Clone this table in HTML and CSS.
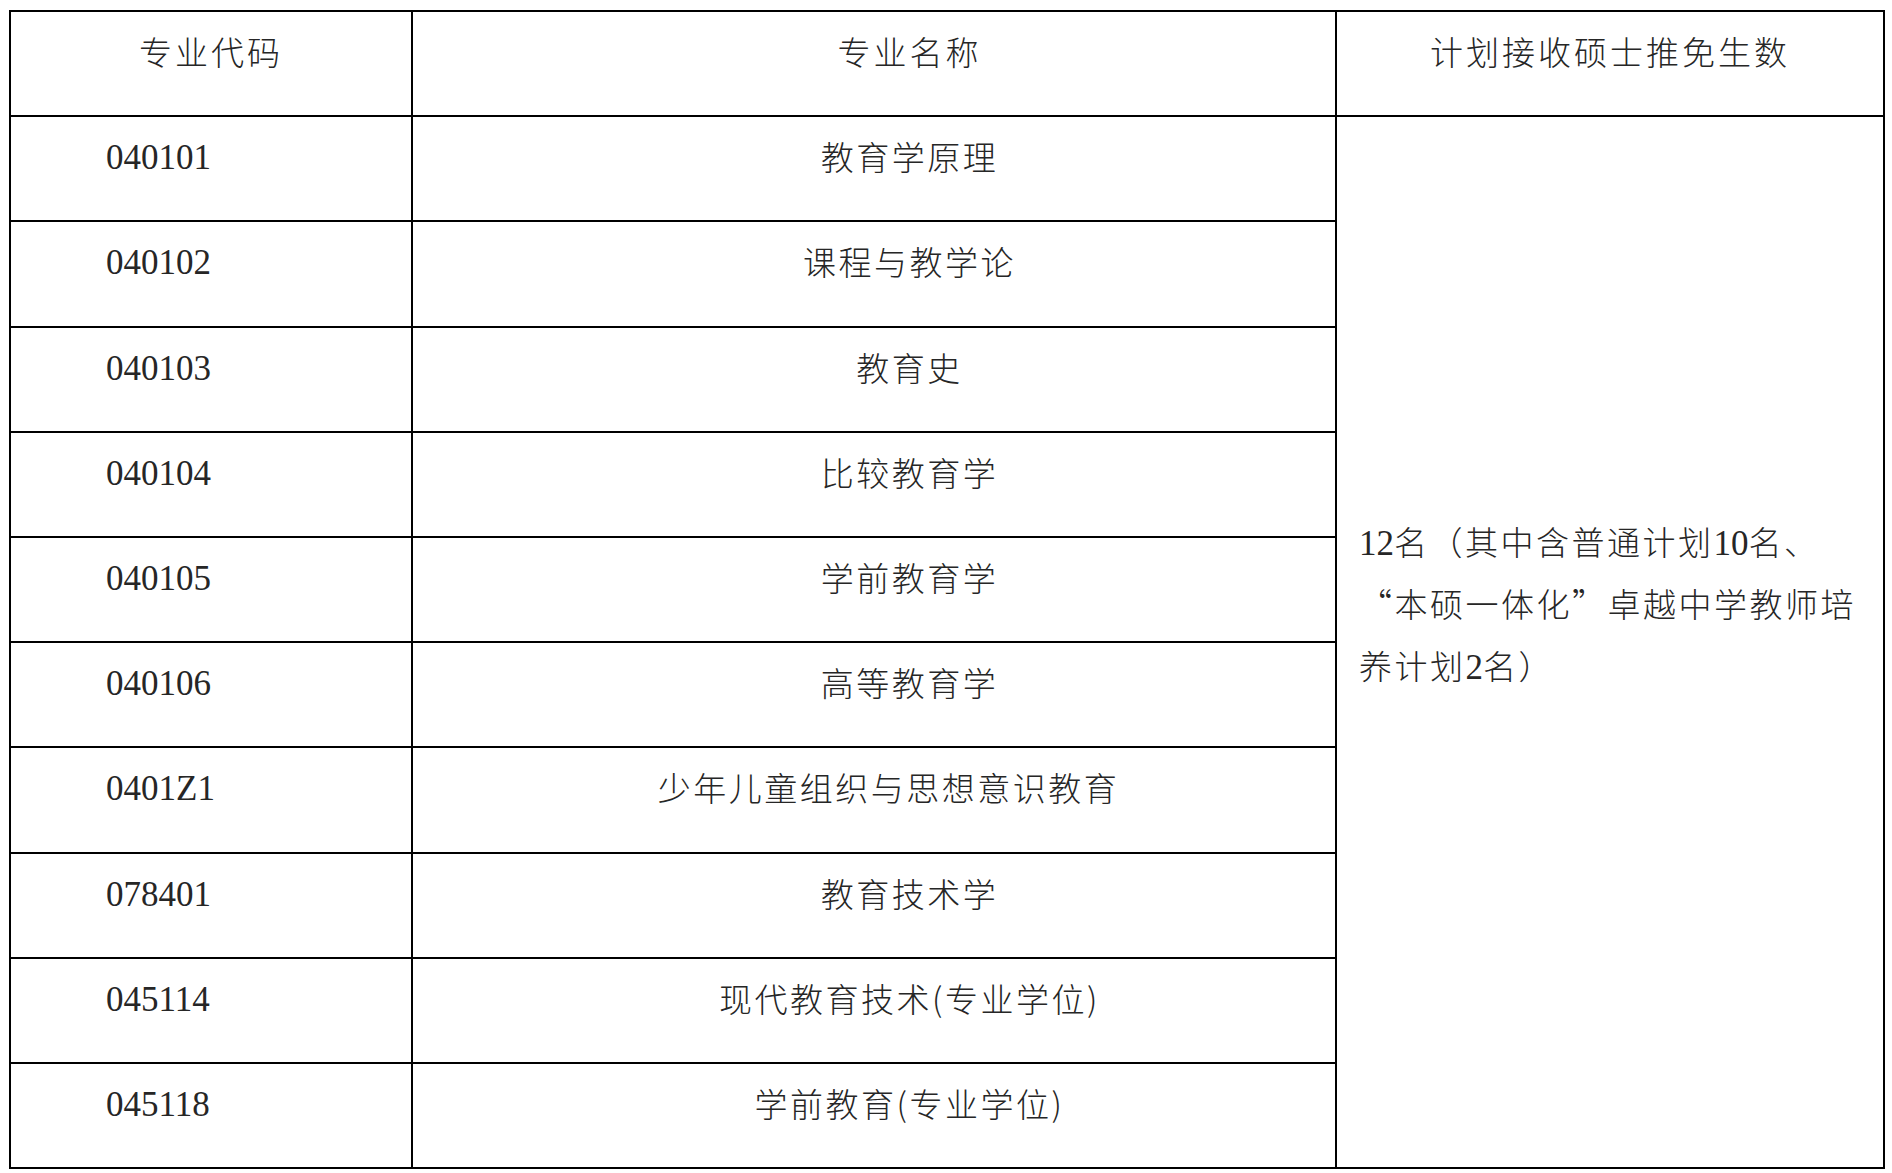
FILE: index.html
```html
<!DOCTYPE html>
<html lang="zh-CN">
<head>
<meta charset="utf-8">
<title>计划接收硕士推免生数</title>
<link rel="stylesheet" href="styles.css">
</head>
<body>
<table class="plan">
  <thead>
    <tr>
      <th class="h-code">专业代码</th>
      <th class="h-name">专业名称</th>
      <th class="h-quota">计划接收硕士推免生数</th>
    </tr>
  </thead>
  <tbody>
    <tr>
      <td class="code">040101</td>
      <td class="name">教育学原理</td>
      <td class="quota" rowspan="10"><span class="num">12</span>名（其中含普通计划<span class="num">10</span>名、<br>“本硕一体化”卓越中学教师培<br>养计划<span class="num">2</span>名）</td>
    </tr>
    <tr>
      <td class="code">040102</td>
      <td class="name">课程与教学论</td>
    </tr>
    <tr>
      <td class="code">040103</td>
      <td class="name">教育史</td>
    </tr>
    <tr>
      <td class="code">040104</td>
      <td class="name">比较教育学</td>
    </tr>
    <tr>
      <td class="code">040105</td>
      <td class="name">学前教育学</td>
    </tr>
    <tr>
      <td class="code">040106</td>
      <td class="name">高等教育学</td>
    </tr>
    <tr>
      <td class="code">0401Z1</td>
      <td class="name name-short-indent">少年儿童组织与思想意识教育</td>
    </tr>
    <tr>
      <td class="code">078401</td>
      <td class="name">教育技术学</td>
    </tr>
    <tr>
      <td class="code">045114</td>
      <td class="name">现代教育技术(专业学位)</td>
    </tr>
    <tr>
      <td class="code">045118</td>
      <td class="name">学前教育(专业学位)</td>
    </tr>
  </tbody>
</table>
</body>
</html>
```

FILE: styles.css
```css
html, body {
  margin: 0;
  padding: 0;
  background: #ffffff;
}

.plan {
  box-sizing: border-box;
  width: 1876px;
  margin: 10px 0 0 9px;
  border-collapse: separate;
  border-spacing: 0;
  table-layout: fixed;
  border-top: 2px solid #000;
  border-left: 2px solid #000;
  font-family: "Noto Sans CJK SC", sans-serif;
  font-weight: 300;
  font-size: 33px;
  line-height: 62px;
  color: #262626;
}

.plan tr {
  height: 105.2px;
}

.plan th,
.plan td {
  box-sizing: border-box;
  border-right: 2px solid #000;
  border-bottom: 2px solid #000;
  padding: 8px 0 0 0;
  vertical-align: top;
  font-weight: 300;
  white-space: nowrap;
}

.plan th {
  text-align: center;
  letter-spacing: 3px;
}

.plan th.h-code {
  width: 402px;
}

.plan th.h-name {
  width: 924px;
  padding-left: 71px;
}

.plan th.h-quota {
  width: 548px;
}

.plan td.code {
  font-family: "Liberation Serif", "Noto Sans CJK SC", serif;
  font-size: 35px;
  font-weight: 400;
  text-align: left;
  padding-top: 10px;
  padding-left: 95px;
}

.plan td.name {
  text-align: center;
  letter-spacing: 2.5px;
  padding-left: 71px;
}

.plan td.name-short-indent {
  padding-left: 29px;
}

.plan td.quota {
  vertical-align: middle;
  text-align: left;
  letter-spacing: 2.5px;
  padding: 0 18px 78px 22px;
}

.num {
  font-family: "Liberation Serif", serif;
  font-size: 35px;
  font-weight: 400;
  line-height: 1;
  letter-spacing: 0;
}
```
